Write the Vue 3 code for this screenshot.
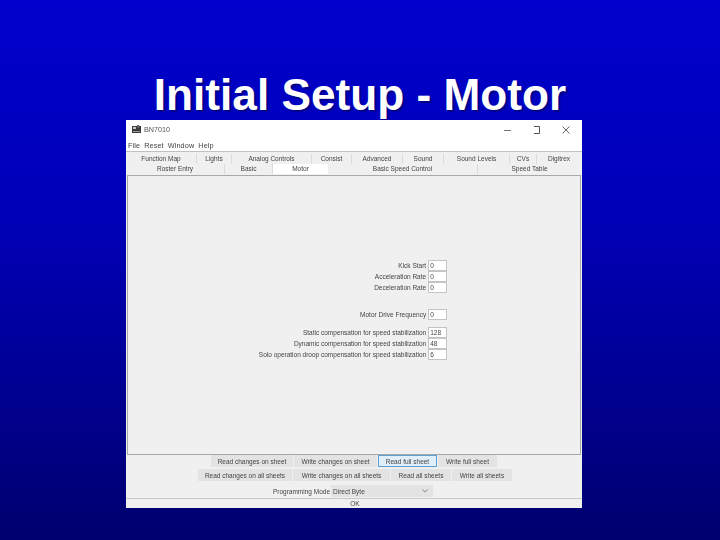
<template>
  <div class="slide">
    <h1 class="title">Initial Setup - Motor</h1>

    <div class="window">
      <div class="titlebar">
        <div class="app-name">
          <svg class="app-icon" width="9" height="9" viewBox="0 0 9 9">
            <rect x="0" y="1" width="9" height="7" fill="#3a3a3a" />
            <rect x="1" y="2" width="3" height="2" fill="#c8c8c8" />
            <rect x="5" y="0" width="2" height="3" fill="#666" />
            <rect x="1" y="6" width="7" height="1" fill="#999" />
          </svg>
          <span>BN7010</span>
        </div>
        <div class="win-buttons">
          <svg width="8" height="8" viewBox="0 0 8 8"><path d="M0 4.500H7" stroke="#777" fill="none" /></svg>
          <svg width="8" height="8" viewBox="0 0 8 8"><path d="M1 .5H6.500V7.500H1" stroke="#555" fill="none" /></svg>
          <svg width="8" height="8" viewBox="0 0 8 8"><path d="M.5 .5L7.500 7.500M7.500 .5L.5 7.500" stroke="#666" fill="none" /></svg>
        </div>
      </div>

      <div class="menubar">
        <span v-for="m in menus" :key="m">{{ m }}</span>
      </div>

      <div class="tabs">
        <div v-for="(row, i) in tabRows" :key="i" class="tab-row">
          <div
            v-for="tab in row"
            :key="tab.name"
            class="tab"
            :class="{ active: tab.name === 'Motor' }"
            :style="{ width: tab.w + 'px' }"
          >
            {{ tab.name }}
          </div>
        </div>
      </div>

      <div class="panel">
        <div class="form">
          <div
            v-for="f in fields"
            :key="f.label"
            class="field"
            :class="f.cls"
          >
            <label>{{ f.label }}</label>
            <div class="input">{{ f.value }}</div>
          </div>
        </div>
      </div>

      <div class="btn-row first">
        <button v-for="b in sheetButtons" :key="b.name" :class="{ focus: b.focus }" :style="{ width: b.w + 'px' }">{{ b.name }}</button>
      </div>
      <div class="btn-row second">
        <button v-for="b in allButtons" :key="b.name" :style="{ width: b.w + 'px' }">{{ b.name }}</button>
      </div>

      <div class="mode-row">
        <label>Programming Mode</label>
        <div class="select">
          <span>Direct Byte</span>
          <svg width="6" height="4" viewBox="0 0 6 4"><path d="M.5 .5L3 3L5.500 .5" stroke="#888" fill="none" /></svg>
        </div>
      </div>

      <div class="ok-row">OK</div>
    </div>
  </div>
</template>

<script setup>
const menus = ['File', 'Reset', 'Window', 'Help']

const tabRows = [
  [
    { name: 'Function Map', w: 71 },
    { name: 'Lights', w: 35 },
    { name: 'Analog Controls', w: 80 },
    { name: 'Consist', w: 40 },
    { name: 'Advanced', w: 51 },
    { name: 'Sound', w: 41 },
    { name: 'Sound Levels', w: 66 },
    { name: 'CVs', w: 27 },
    { name: 'Digitrex', w: 44 }
  ],
  [
    { name: 'Roster Entry', w: 99 },
    { name: 'Basic', w: 48 },
    { name: 'Motor', w: 55 },
    { name: 'Basic Speed Control', w: 150 },
    { name: 'Speed Table', w: 103 }
  ]
]

const fields = [
  { label: 'Kick Start', value: '0' },
  { label: 'Acceleration Rate', value: '0' },
  { label: 'Deceleration Rate', value: '0' },
  { label: 'Motor Drive Frequency', value: '0', cls: 'gap-big' },
  { label: 'Static compensation for speed stabilization', value: '128', cls: 'gap-small' },
  { label: 'Dynamic compensation for speed stabilization', value: '48' },
  { label: 'Solo operation droop compensation for speed stabilization', value: '6' }
]

const sheetButtons = [
  { name: 'Read changes on sheet', w: 82 },
  { name: 'Write changes on sheet', w: 83 },
  { name: 'Read full sheet', w: 59, focus: true },
  { name: 'Write full sheet', w: 59 }
]

const allButtons = [
  { name: 'Read changes on all sheets', w: 94 },
  { name: 'Write changes on all sheets', w: 97 },
  { name: 'Read all sheets', w: 60 },
  { name: 'Write all sheets', w: 60 }
]
</script>

<style>
html,
body {
  margin: 0;
  padding: 0;
}
</style>

<style scoped>
.slide {
  width: 720px;
  height: 540px;
  overflow: hidden;
  background: linear-gradient(180deg, #0000cc 0%, #0000b8 40%, #000094 70%, #00006e 100%);
  font-family: "Liberation Sans", Arial, sans-serif;
}
.title {
  margin: 0;
  height: 120px;
  padding-top: 69px;
  box-sizing: border-box;
  text-align: center;
  font-size: 44.2px;
  line-height: 52px;
  font-weight: bold;
  color: #fff;
  white-space: nowrap;
  text-shadow: 2px 2px 1px rgba(0, 0, 90, 0.55);
}
.window {
  width: 456px;
  height: 388px;
  margin-left: 126px;
  background: #f0f0f0;
  color: #444;
  font-size: 6.5px;
  display: flex;
  flex-direction: column;
  overflow: hidden;
  filter: blur(0.35px);
}
.titlebar {
  flex: none;
  height: 19px;
  background: #fff;
  display: flex;
  justify-content: space-between;
  align-items: center;
  padding: 0 12px 0 6px;
}
.app-name {
  display: flex;
  align-items: center;
  gap: 3px;
  font-size: 7.2px;
  color: #555;
}
.win-buttons {
  display: flex;
  gap: 21px;
}
.menubar {
  flex: none;
  height: 13px;
  background: #fff;
  display: flex;
  align-items: center;
  gap: 4px;
  padding-left: 2px;
  font-size: 7.3px;
  letter-spacing: 0.1px;
  color: #444;
  border-bottom: 1px solid #c0c0c0;
  box-sizing: border-box;
}
.tabs {
  flex: none;
}
.tab-row {
  display: flex;
  height: 10px;
}
.tab-row:first-child {
  height: 12px;
  padding-top: 2px;
  box-sizing: border-box;
}
.tab {
  text-align: center;
  line-height: 10px;
  white-space: nowrap;
  border-right: 1px solid #dcdcdc;
  box-sizing: border-box;
}
.tab:last-child {
  border-right: none;
}
.tab.active {
  background: #fff;
  border-right: none;
}
.panel {
  flex: none;
  height: 280px;
  margin: 1px 1px 0;
  background: #f0f0f0;
  border: 1px solid #a8a8a8;
  box-sizing: border-box;
  display: flex;
  flex-direction: column;
  align-items: center;
  justify-content: center;
}
.form {
  display: flex;
  flex-direction: column;
  align-items: flex-end;
  margin-bottom: 10px;
  margin-left: -2px;
}
.field {
  display: flex;
  align-items: center;
  gap: 2px;
  height: 11px;
}
.field.gap-big {
  margin-top: 16px;
}
.field.gap-small {
  margin-top: 7px;
}
.input {
  width: 19px;
  height: 11px;
  box-sizing: border-box;
  background: #fff;
  border: 1px solid #c4c4c4;
  line-height: 9px;
  padding-left: 1px;
}
.btn-row {
  flex: none;
  display: flex;
  height: 12px;
  gap: 1px;
}
.btn-row.first {
  padding-left: 85px;
}
.btn-row.second {
  margin-top: 2px;
  padding-left: 72px;
}
button {
  height: 12px;
  padding: 0;
  background: #e3e3e3;
  border: none;
  color: #444;
  font: inherit;
  white-space: nowrap;
}
button.focus {
  background: #e1effa;
  border: 1px solid #5a9fd4;
}
.mode-row {
  flex: none;
  display: flex;
  justify-content: flex-end;
  align-items: center;
  height: 12px;
  margin-top: 4px;
  padding-right: 149px;
  gap: 1px;
}
.select {
  width: 102px;
  height: 12px;
  box-sizing: border-box;
  background: #e3e3e3;
  padding: 0 5px 0 2px;
  display: flex;
  justify-content: space-between;
  align-items: center;
}
.ok-row {
  margin-top: 1px;
  flex: 1;
  min-height: 0;
  border-top: 1px solid #c8c8c8;
  text-align: center;
  line-height: 10px;
  padding-left: 2px;
}
</style>
